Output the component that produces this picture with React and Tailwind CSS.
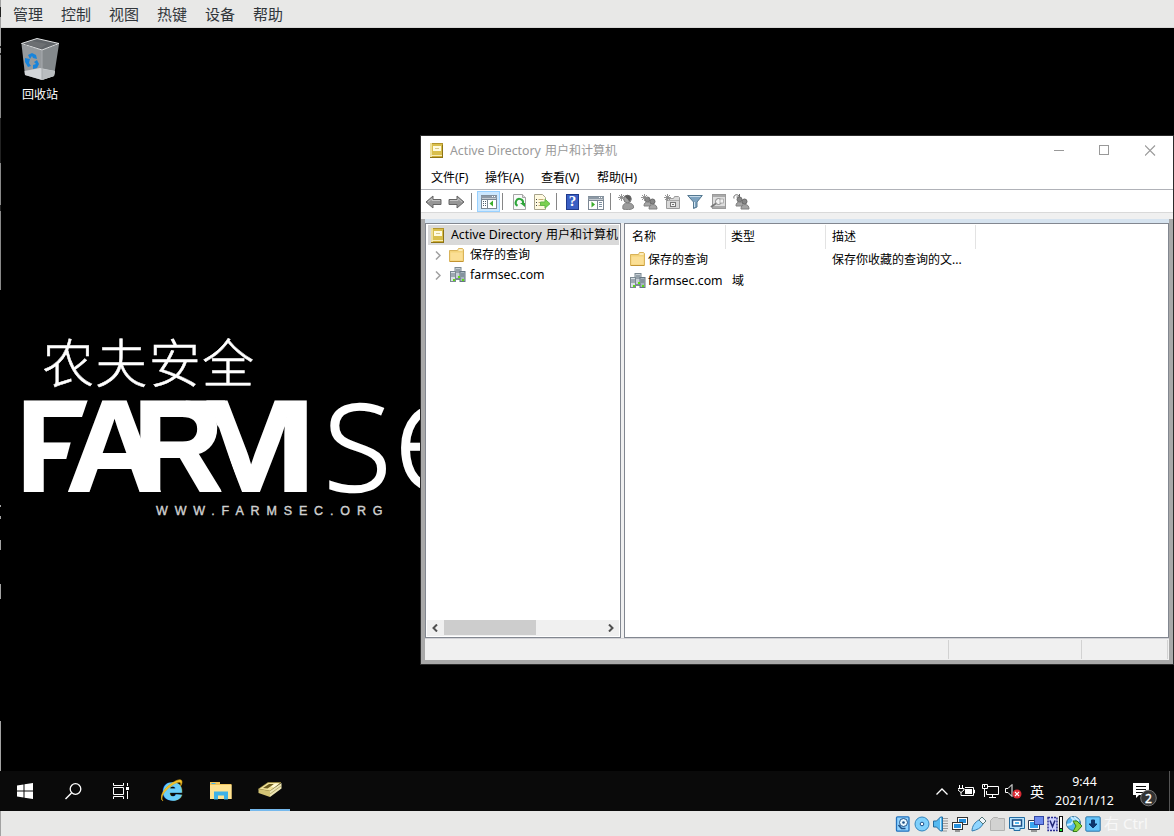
import React from "react";

const UI = "font-['Noto_Sans','Noto_Sans_CJK_SC',sans-serif]";

function Svg({ w = 16, h = 16, className = "", children }) {
  return (
    <svg width={w} height={h} viewBox={`0 0 ${w} ${h}`} className={`block shrink-0 ${className}`}>
      {children}
    </svg>
  );
}

/* ---------- Window icons ---------- */

const BookIcon = () => (
  <Svg w={13} h={15}>
    <rect x="0.5" y="0.5" width="12" height="14" fill="#cfae35" stroke="#b3952c" />
    <rect x="0" y="0" width="2" height="14" fill="#efe09a" />
    <rect x="2" y="1" width="10" height="11" fill="#d9bf4c" />
    <rect x="3" y="3" width="8" height="5" fill="#fffbe0" />
    <path d="M5 5.500h4" stroke="#d9cb8c" />
    <path d="M1 12.500h11" stroke="#f6ecb8" />
    <path d="M0 14.500h13M12.500 2v12" stroke="#8d7316" />
  </Svg>
);

const FolderIcon = () => (
  <Svg w={15} h={14}>
    <path d="M.5 2.500h8l1-2h4l1 1v12H.5z" fill="#f3d37a" stroke="#d9b35a" />
    <path d="M9.500 2h4" stroke="#fff5d0" strokeWidth="1.500" />
    <path d="M1.500 4.500h12v8h-12z" fill="#fbdf95" />
    <path d="M1 13.500h13" stroke="#c39432" />
  </Svg>
);

const DomainIcon = () => (
  <Svg w={16} h={16}>
    <rect x="5" y="0.5" width="6" height="12" fill="#c8d0d6" stroke="#7b8992" />
    <rect x="0.5" y="4.500" width="5" height="10" fill="#d9e0e5" stroke="#7b8992" />
    <rect x="10" y="4.500" width="5" height="10" fill="#a6b4be" stroke="#667681" />
    <path d="M6 3h4M6 5h4M1 7h4M1 9h4M11 7h3M11 9h3" stroke="#63737e" />
    <path d="M5 11.500h6" stroke="#7d8b95" />
    <rect x="3" y="12" width="2" height="2" fill="#5cdc13" />
    <rect x="12" y="12" width="2" height="2" fill="#5cdc13" />
    <rect x="8" y="9" width="2" height="2" fill="#5cdc13" />
  </Svg>
);

/* ---------- Toolbar icons ---------- */

const ArrowIcon = ({ flip }) => (
  <Svg w={17} h={14} className={flip ? "-scale-x-100" : ""}>
    <path d="M1 7l7-6v3.500h8v5H8V13z" fill="#969696" stroke="#666" strokeLinejoin="round" />
    <path d="M3 7l4-3.400V5.500h8" fill="none" stroke="#c3c3c3" />
  </Svg>
);

const TreePaneIcon = () => (
  <Svg w={16} h={14}>
    <rect x="0.5" y="0.5" width="15" height="13" fill="#fff" stroke="#7b8793" />
    <path d="M0 2h16" stroke="#8d99a5" strokeWidth="3" />
    <path d="M11 1.500h1M13 1.500h1" stroke="#fff" />
    <path d="M6.500 4v10M1 4.500h14" stroke="#7b8793" />
    <path d="M2 6.500h1M4 6.500h1M2 8.500h1M4 8.500h1M2 10.500h1M4 10.500h1" stroke="#506070" />
    <path d="M12 5.500v6L8.500 8.500z" fill="#3bae2c" />
  </Svg>
);

const ActionPaneIcon = () => (
  <Svg w={16} h={14}>
    <rect x="0.5" y="0.5" width="15" height="13" fill="#fff" stroke="#7b8793" />
    <path d="M0 2h16" stroke="#8d99a5" strokeWidth="3" />
    <path d="M11 1.500h1M13 1.500h1" stroke="#fff" />
    <path d="M9.500 4v10M1 4.500h14" stroke="#7b8793" />
    <path d="M11 6.500h3M11 8.500h3M11 10.500h3" stroke="#7d8fa0" />
    <path d="M3.500 5.500v6L7 8.500z" fill="#3bae2c" />
  </Svg>
);

const RefreshIcon = () => (
  <Svg w={13} h={16}>
    <path d="M.5.5h9l3 3v12H.5z" fill="#fafafa" stroke="#a5a5a5" />
    <path d="M9.500.5v3h3" fill="#ddd" stroke="#a5a5a5" />
    <path d="M4.500 11.800A3.700 3.700 0 1 1 10 9.400" fill="none" stroke="#2ea53a" strokeWidth="2" />
    <path d="M7 9h5v4z" fill="#2ea53a" />
  </Svg>
);

const ExportIcon = () => (
  <Svg w={17} h={16}>
    <path d="M.5.5h8l3 3v12H.5z" fill="#fffae0" stroke="#a8a48c" />
    <path d="M2 5.500h1M2 8.500h1M2 11.500h1" stroke="#444" />
    <path d="M4.500 5.500h5M4.500 8.500h4M4.500 11.500h4" stroke="#c0aa75" />
    <path d="M6.500 8h4.500V5.200L16 9.700l-5 4.500v-2.700H6.500z" fill="#7bd150" stroke="#64b84a" />
  </Svg>
);

const HelpIcon = () => (
  <span className="flex h-4 w-[13px] shrink-0 items-center justify-center border border-[#1f3a8c] bg-[#3a5fc4] font-['Liberation_Serif',serif] text-[15px] font-bold leading-none text-white">
    ?
  </span>
);

const Star = () => (
  <path d="M3.500 0v7M0 3.500h7M1 1l5 5M6 1L1 6" stroke="#8a8a8a" strokeWidth=".9" />
);

const UserIcon = () => (
  <Svg w={17} h={16}>
    <circle cx="9.500" cy="5" r="3.800" fill="#a0a0a0" stroke="#777" />
    <path d="M7 2c3-2 6 0 6 3l-2 3c0-3-3-3-4-6z" fill="#5a5a5a" />
    <path d="M5 15c-1-4 1-6 5-6s6 2 5.500 5c-2 2-8 2-10.500 1z" fill="#9c9c9c" stroke="#808080" />
    <Star />
  </Svg>
);

const Users = () => (
  <>
    <circle cx="6.500" cy="5.500" r="2.500" fill="#858585" stroke="#6c6c6c" />
    <path d="M3 12c0-3 1.500-4 4-4s3 2 3 4z" fill="#a5a5a5" stroke="#808080" />
    <circle cx="11.500" cy="7.500" r="2.500" fill="#858585" stroke="#666" />
    <path d="M8 15c0-3 1.500-4.500 4-4.500s4 1.500 4 4.500z" fill="#a5a5a5" stroke="#808080" />
  </>
);

const GroupIcon = () => (
  <Svg w={17} h={16}>
    <Users />
    <Star />
  </Svg>
);

const AddGroupIcon = () => (
  <Svg w={17} h={16}>
    <Users />
    <path d="M1 4.500C0 1 4-.5 6 2M6.500 0v3h-3" fill="none" stroke="#666" />
  </Svg>
);

const OuIcon = () => (
  <Svg w={17} h={16}>
    <path d="M2.500 4.500h7l1-2h4l1 1v11h-13z" fill="#d8d8d8" stroke="#9b9b9b" />
    <path d="M3 6.500h12" stroke="#aaa" />
    <rect x="6.500" y="8.500" width="5" height="4" fill="#f4f4f4" stroke="#777" />
    <path d="M8 10.500h2" stroke="#777" />
    <Star />
  </Svg>
);

const FilterIcon = () => (
  <Svg w={16} h={15}>
    <path d="M.7 1.500h14.600L10 8v5L6.500 14.500V8z" fill="#7ea3c0" stroke="#547890" />
    <path d="M2.500 2.500h11" stroke="#c6dbea" />
    <path d="M7.500 8v5" stroke="#d2e4f0" />
  </Svg>
);

const FindIcon = () => (
  <Svg w={16} h={16}>
    <rect x="2.500" y=".5" width="13" height="14" fill="#ddd" stroke="#9a9a9a" />
    <path d="M3 2h12M3 13h12" stroke="#aaa" strokeWidth="2" />
    <circle cx="8.500" cy="7.500" r="3" fill="#f2f2f2" stroke="#858585" />
    <rect x="10" y="5" width="3.500" height="4" fill="#f2f2f2" stroke="#999" strokeWidth=".7" />
    <path d="M6 9.500L.8 13" stroke="#777" strokeWidth="1.600" />
  </Svg>
);

const Sep = ({ className = "" }) => <span className={`h-[17px] w-px shrink-0 bg-[#868686] ${className}`} />;

const Chevron = () => (
  <Svg w={6} h={9}>
    <path d="M1 .5l4 4-4 4" fill="none" stroke="#a0a0a0" strokeWidth="1.500" />
  </Svg>
);

/* ---------- Directory window ---------- */

function Toolbar() {
  return (
    <div className="flex h-[23px] items-center border-b border-[#d9d9d9] pl-1 pt-px">
      <ArrowIcon />
      <span className="ml-1.5"><ArrowIcon flip /></span>
      <Sep className="ml-1.5" />
      <span className="ml-[5px] flex h-[21px] w-[23px] shrink-0 items-center justify-center border border-[#99d1ff] bg-[#cce8ff] pt-px">
        <TreePaneIcon />
      </span>
      <Sep className="ml-[2px]" />
      <span className="ml-[10px] pt-px"><RefreshIcon /></span>
      <span className="ml-2 pt-px"><ExportIcon /></span>
      <Sep className="ml-[5px]" />
      <span className="ml-[9px]"><HelpIcon /></span>
      <span className="ml-[9px] pt-0.5"><ActionPaneIcon /></span>
      <Sep className="ml-[6px]" />
      <span className="ml-[7px]"><UserIcon /></span>
      <span className="ml-1.5"><GroupIcon /></span>
      <span className="ml-1.5"><OuIcon /></span>
      <span className="ml-1.5"><FilterIcon /></span>
      <span className="ml-[7px]"><FindIcon /></span>
      <span className="ml-[7px]"><AddGroupIcon /></span>
    </div>
  );
}

function TreePane() {
  return (
    <div className="flex w-[196px] shrink-0 flex-col border border-[#828790] bg-white py-px pl-px pr-px">
      <div className="ml-px flex h-5 items-center overflow-hidden bg-[#d9d9d9] pl-[3px] text-[12.300px]">
        <BookIcon />
        <span className="ml-[7px] flex whitespace-nowrap">
          <span className="w-[95px]">Active Directory</span>
          <span className="text-[12px]">用户和计算机</span>
        </span>
      </div>
      <div className="flex h-5 items-center pl-2">
        <Chevron />
        <span className="ml-2"><FolderIcon /></span>
        <span className="ml-[6px]">保存的查询</span>
      </div>
      <div className="flex h-5 items-center pl-2">
        <Chevron />
        <span className="ml-[9px]"><DomainIcon /></span>
        <span className="ml-1 text-[12.300px]">farmsec.com</span>
      </div>
      <div className="mt-auto flex h-4 items-center bg-[#f0f0f0]">
        <span className="flex w-[17px] justify-center pr-0.5">
          <Svg w={6} h={8}><path d="M5 .5L1.500 4 5 7.500" fill="none" stroke="#505050" strokeWidth="2" /></Svg>
        </span>
        <span className="h-[15px] w-[92px] self-start bg-[#cdcdcd]" />
        <span className="ml-auto flex w-[17px] justify-center">
          <Svg w={6} h={8}><path d="M1 .5L4.500 4 1 7.500" fill="none" stroke="#505050" strokeWidth="2" /></Svg>
        </span>
      </div>
    </div>
  );
}

function ListPane() {
  return (
    <div className="flex-1 border border-[#828790] bg-white pt-px">
      <div className="flex h-6 items-center">
        <span className="flex h-full w-[101px] items-center border-r border-[#e3e3e3] pl-[7px]">名称</span>
        <span className="flex h-full w-[100px] items-center border-r border-[#e3e3e3] pl-[5px]">类型</span>
        <span className="flex h-full w-[150px] items-center border-r border-[#e3e3e3] pl-[6px]">描述</span>
      </div>
      <div className="flex h-[21px] items-center">
        <span className="flex w-[201px] items-center pl-[5px]">
          <span className="-mt-0.5"><FolderIcon /></span>
          <span className="ml-[3px]">保存的查询</span>
        </span>
        <span className="pl-[6px]">保存你收藏的查询的文...</span>
      </div>
      <div className="flex h-[22px] items-center">
        <span className="flex w-[101px] items-center pl-[5px]">
          <span className="-mt-px"><DomainIcon /></span>
          <span className="ml-0.5 pt-px text-[12.300px]">farmsec.com</span>
        </span>
        <span className="pl-[6px]">域</span>
      </div>
    </div>
  );
}

function DirectoryWindow() {
  return (
    <section className={`absolute left-[420px] top-[107px] flex h-[530px] w-[754px] flex-col border border-[#2b2b2b] bg-white text-[12px] leading-none text-black ${UI}`}>
      <header className="flex h-[30px] items-center pb-px pl-[9px] text-[#999]">
        <BookIcon />
        <span className="ml-[7px] flex items-center whitespace-nowrap pt-px text-[12.300px]">
          <span className="w-[95px]">Active Directory</span>
          <span className="text-[12px]">用户和计算机</span>
        </span>
        <span className="ml-auto flex items-center gap-[35px] pb-px pr-[17px]">
          <Svg w={11} h={11}><path d="M1 5.500h10" stroke="#999" /></Svg>
          <Svg w={11} h={11}><rect x=".5" y=".5" width="9" height="9" fill="none" stroke="#999" /></Svg>
          <Svg w={11} h={11}><path d="M0 .5l10 10M10 .5l-10 10" stroke="#999" strokeWidth="1.100" /></Svg>
        </span>
      </header>
      <nav className="flex h-6 items-center gap-4 border-b border-[#b0b2b8] pl-[10px] text-[12px]">
        <span className="w-[38px] whitespace-nowrap">文件(F)</span>
        <span className="w-10 whitespace-nowrap">操作(A)</span>
        <span className="w-10 whitespace-nowrap">查看(V)</span>
        <span className="w-10 whitespace-nowrap">帮助(H)</span>
      </nav>
      <Toolbar />
      <div className="h-[6px] bg-[#f0f0f0]" />
      <div className="flex flex-1 flex-col border-x-4 border-b-4 border-[#a9a9a9] bg-[#f0f0f0]">
        <div className="h-1 bg-[#d6e3ef]" />
        <div className="flex h-[415px] gap-[3px]">
          <TreePane />
          <ListPane />
        </div>
        <footer className="flex flex-1 justify-end border-t border-[#d2d2d6] pb-px pt-px">
          <span className="w-[133px] border-l border-[#d2d2d2]" />
          <span className="w-[87px] border-x border-[#d2d2d2]" />
          <span className="w-px" />
        </footer>
      </div>
    </section>
  );
}

/* ---------- Desktop ---------- */

function RecycleBin() {
  return (
    <div className={`flex w-20 flex-col items-center pt-[9px] text-[12px] leading-none text-white ${UI}`}>
      <Svg w={40} h={44}>
        <path d="M1.500 7L22 13v30L5 38z" fill="#969a9d" />
        <path d="M39 7L22 13v30l12-4z" fill="#84898c" />
        <path d="M4.500 34L20 31l15 3-1 5-12 4L5 38z" fill="#d2d5d8" />
        <path d="M22 32l13 2-1 5-12 4z" fill="#b9bdc0" />
        <path d="M1.500 6.500L17 1.500l22 5L22 13z" fill="#606468" stroke="#e1e3e4" />
        <path d="M12 4l15 3-6 4L4 7z" fill="#6c6f72" />
        <path d="M22 13v30" stroke="#a7abae" />
        <g fill="#1784dc">
          <path d="M8 18l4-2 4 2 1 4-4-1-1-2-2 3z" />
          <path d="M5 21l5 1-1 4 2 3-3 1-3-5z" />
          <path d="M17 23l2 4-2 4-4 1v-4l3-1-2-2z" />
        </g>
      </Svg>
      <span className="mt-2">回收站</span>
    </div>
  );
}

function Wallpaper() {
  return (
    <svg width="421" height="200" viewBox="0 330 421 200" className="absolute left-0 top-[302px] fill-white">
      <defs>
        <clipPath id="mClip">
          <path d="M204 395H320V500H241L218 427z" />
        </clipPath>
      </defs>
      <text x="42" y="382.500" fontSize="52" textLength="212" stroke="#fff" strokeWidth=".5" className="font-['Noto_Sans_CJK_SC',sans-serif] font-light">
        农夫安全
      </text>
      <g className="font-['Liberation_Sans',sans-serif] font-bold" fontSize="130" stroke="#fff" strokeWidth="2">
        <text x="16.500" y="491" textLength="76" lengthAdjust="spacingAndGlyphs">F</text>
        <path d="M88.500 398H98V420H81z" fill="#000" stroke="none" />
        <path d="M73.500 432L65.500 462H95V432z" fill="#000" stroke="none" />
        <text x="66" y="491" textLength="97" lengthAdjust="spacingAndGlyphs">A</text>
        <text x="133" y="491" textLength="90" lengthAdjust="spacingAndGlyphs">R</text>
        <path d="M185 400.500H225V412H212z" stroke="none" />
        <g clipPath="url(#mClip)">
          <text x="186" y="491" textLength="130" lengthAdjust="spacingAndGlyphs">M</text>
        </g>
        <path d="M218.500 426L241.500 494H222L214 450z" fill="#000" stroke="none" />
      </g>
      <g className="font-['Open_Sans',sans-serif] font-light" fontSize="119" stroke="#fff" strokeWidth="2.600">
        <text x="324" y="491" textLength="67" lengthAdjust="spacingAndGlyphs">S</text>
        <text x="395" y="491">Є</text>
      </g>
      <text x="156" y="515" fontSize="12.500" textLength="226.500" stroke="#d0d0d0" strokeWidth=".4" className="fill-[#d0d0d0] font-['Liberation_Sans',sans-serif]">
        WWW.FARMSEC.ORG
      </text>
    </svg>
  );
}

/* ---------- Taskbar ---------- */

function Taskbar() {
  return (
    <div className="flex h-10 shrink-0 items-center bg-[#0a0a0a] pl-[17px]">
      <Svg w={16} h={16}>
        <path d="M0 2.500L6.500 1.500v6H0zM7.500 1.300L16 0v7.500H7.500zM0 8.500h6.500v6L0 13.500zM7.500 8.500H16V16l-8.500-1.300z" fill="#fff" />
      </Svg>
      <Svg w={17} h={17} className="ml-8">
        <circle cx="10.500" cy="6" r="5.300" fill="none" stroke="#fff" strokeWidth="1.300" />
        <path d="M6.500 10L.5 16" stroke="#fff" strokeWidth="1.500" />
      </Svg>
      <Svg w={17} h={16} className="ml-[31px]">
        <path d="M.5 0v2.500h10V0M.5 16v-2.500h10V16M.5 4.500h10v7H.5zM14.500 0v3M14.500 8v8" fill="none" stroke="#fff" />
        <rect x="13" y="4" width="3" height="3" fill="#fff" />
      </Svg>
      <Svg w={24} h={24} className="ml-[31px]">
        <text x="1.500" y="21" fontSize="32" textLength="20" lengthAdjust="spacingAndGlyphs" className="fill-[#6bcdf8] font-['Liberation_Sans',sans-serif] font-bold" stroke="#6bcdf8" strokeWidth="1.500">e</text>
        <path d="M2 22C-2 20 1 12 7 7S21-2 21 3c0 1-.5 3-1.500 4C21 2 17 2 10 7S-1 19 2 22z" fill="#f7c52c" stroke="#d9a51a" strokeWidth=".6" />
      </Svg>
      <Svg w={22} h={18} className="ml-[25px]">
        <path d="M0 0h10v2h11.500v15H0z" fill="#f0c45c" />
        <path d="M0 3h21.500v14H0z" fill="#ffe392" />
        <path d="M1.500 1.500h4" stroke="#44b4e8" />
        <path d="M4 17.500v-8h14v8h-4v-4H8v4z" fill="#3fb2e8" />
      </Svg>
      <span className="ml-[18px] flex h-10 w-10 flex-col items-center border-b-2 border-[#76b9ed] pt-[11px]">
        <Svg w={24} h={16}>
          <path d="M.5 7L10 .5h13L12 9z" fill="#f1e39b" stroke="#a08d3a" strokeWidth=".6" />
          <path d="M5 6l6-4h5L9.500 6.500z" fill="#6b5b20" />
          <path d="M13 4.500l4-3h4L16 5.500z" fill="#fff9d5" />
          <path d="M.5 7L12 9v6L.5 11z" fill="#d3c375" />
          <path d="M12 9L23.500 1v5.500L12 15z" fill="#eee6b4" />
          <path d="M12 12l11-8" stroke="#b9ad70" />
        </Svg>
      </span>
      <div className="ml-auto flex h-10 items-center text-white">
        <Svg w={12} h={7}><path d="M.5 6.500L6 1l5.500 5.500" fill="none" stroke="#fff" strokeWidth="1.300" /></Svg>
        <Svg w={17} h={14} className="ml-2.5">
          <path d="M1.500 1v3M4.500 1v3M0 4.500h6v1.500L3 8.500 0 6zM3 8v3.500h3" fill="none" stroke="#fff" />
          <path d="M7 3.500h8.500v8H5M15.500 6h1v3h-1" fill="none" stroke="#fff" />
          <rect x="7" y="5" width="7" height="5" fill="#fff" />
        </Svg>
        <Svg w={17} h={14} className="ml-[7px]">
          <path d="M6 2.500h10.500v8H4.500V7M10.500 11v2.500M7 13.500h7M.5.5h5v4h-5zM2.500 5v8M2.500 1v2" fill="none" stroke="#fff" />
        </Svg>
        <Svg w={18} h={16} className="ml-[6px]">
          <path d="M.5 5.500H3l4-4v12l-4-4H.5z" fill="none" stroke="#fff" />
          <circle cx="12" cy="11" r="4.500" fill="#d92a34" />
          <path d="M10 9l4 4M14 9l-4 4" stroke="#fff" strokeWidth="1.200" />
        </Svg>
        <span className="ml-[7px] w-3.5 font-['Noto_Sans_CJK_SC',sans-serif] text-[14px] leading-none">英</span>
        <span className="ml-[10px] flex w-[61px] flex-col items-center gap-[7px] whitespace-nowrap font-['Noto_Sans',sans-serif] text-[12.400px] leading-[12px]">
          <span>9:44</span>
          <span>2021/1/12</span>
        </span>
        <span className="ml-[18px] h-[19px] w-[26px]">
          <Svg w={26} h={25}>
            <path d="M0 1h16v12H6l-3 3v-3H0z" fill="#fff" />
            <path d="M3 4.500h10M3 7.500h10M3 10.500h7" stroke="#0a0a0a" />
            <circle cx="15.500" cy="16" r="7.800" fill="#333" stroke="#767676" />
            <text x="15.500" y="20.500" textAnchor="middle" fontSize="12" stroke="#fff" strokeWidth=".4" className="fill-white font-['Noto_Sans',sans-serif]">2</text>
          </Svg>
        </span>
        <span className="ml-[10px] h-full w-px bg-[#555]" />
        <span className="w-1" />
      </div>
    </div>
  );
}

/* ---------- Host status bar ---------- */

const LINE = "#1d4f86";

function HostStatusBar() {
  return (
    <div className="flex h-[25px] shrink-0 items-center bg-[#e8e8e7] pl-[895px]">
      <div className="flex items-center gap-[3px]">
        <Svg><rect x="1.500" y=".8" width="12.500" height="14.400" rx="1" fill="#8fd2ff" stroke="#2372bd" strokeWidth="1.300" /><circle cx="8.500" cy="6.500" r="4" fill="#e9f7ff" stroke={LINE} /><circle cx="8.500" cy="6.500" r="1.300" fill={LINE} /><path d="M3.500 9l3 3.500h4" fill="none" stroke={LINE} strokeWidth="1.600" /></Svg>
        <Svg><circle cx="8" cy="8" r="7" fill="#7fd0fb" stroke="#3185bd" /><circle cx="8" cy="8" r="1.800" fill="#fff" stroke={LINE} /></Svg>
        <Svg><path d="M10 2.500h5M10 5h5M10 7.500h5M10 10h5M10 12.500h5M10 15h4" stroke="#999" /><path d="M.5 5h3l4-4h2v14h-2l-4-4h-3z" fill="#55b9f0" stroke="#246c9f" /><path d="M7.500 2v12" stroke="#c7ecff" /></Svg>
        <Svg><rect x="5.500" y="1.500" width="10" height="7" fill="#fff" stroke="#333" /><rect x="7" y="3" width="7" height="4" fill="#2690dd" /><rect x=".5" y="6.500" width="10" height="7" fill="#fff" stroke="#333" /><rect x="2" y="8" width="7" height="4" fill="#2690dd" /><path d="M3 15h5" stroke="#444" /></Svg>
        <Svg><path d="M1 15c0-5 3-9 7-11l4 4c-2 4-6 6-11 7z" fill="#8fd5ff" stroke="#367eaf" /><path d="M8 4l3-3 4 4-3 3z" fill="#eef5fa" stroke="#577" /></Svg>
        <Svg><path d="M.5 4.500l3-3h4l1 1h6v12H.5z" fill="#d2d2d1" stroke="#b2b2b1" /></Svg>
        <Svg><path d="M.5 1.500h15v11H11v2H5v-2H.5z" fill="#b7e4ff" stroke="#236da2" /><rect x="3.500" y="4" width="9" height="6" fill="#fff" stroke={LINE} strokeWidth="1.500" /><rect x="6" y="6" width="4" height="2" fill="#55b9f0" /></Svg>
        <Svg><path d="M.5 4.500h11v9H.5z" fill="#fff" stroke="#333b50" /><path d="M2 6h8v6H2z" fill="#38a6ef" /><path d="M3 15h6" stroke="#444" /><rect x="6.500" y=".5" width="9" height="8" fill="#6e8cee" stroke="#3348a5" /></Svg>
        <Svg><rect x="1" y="1.500" width="9" height="13" fill="#ccd1ff" stroke="#282c91" strokeWidth="1.400" strokeDasharray="2 1" /><path d="M3 4.500l2.500 6L8 4.500" fill="none" stroke="#202776" strokeWidth="1.500" /><rect x="12" y="0" width="4" height="16" fill="#111" /><rect x="13" y="1" width="2" height="11" fill="#fff" /><rect x="13" y="13" width="2" height="2" fill="#13ec30" /></Svg>
        <Svg><circle cx="7.500" cy="7.500" r="7" fill="#54b6f1" stroke="#336b91" /><path d="M5 1l3 3-3 4-4 1M8 1l5 4" fill="none" stroke="#c7ecff" strokeWidth="2" /><path d="M7 5h4l5 5-5 5.500H7l3-5.500z" fill="#8ed33e" stroke="#367f18" /></Svg>
        <Svg><rect x=".8" y=".8" width="14.400" height="14.400" rx="1" fill="#65c4fa" stroke="#2d75a8" /><path d="M6.500 4h3v4h2.500l-4 4-4-4h2.500z" fill="#0d356b" stroke="#0d356b" strokeLinejoin="round" /></Svg>
      </div>
      <span className="ml-[3px] whitespace-nowrap font-['Noto_Sans','Noto_Sans_CJK_SC',sans-serif] text-[15px] leading-none text-[#f8f8f8]">右 Ctrl</span>
    </div>
  );
}

const MENUS = ["管理", "控制", "视图", "热键", "设备", "帮助"];

export default function App() {
  return (
    <main className="relative flex h-[836px] w-[1174px] flex-col overflow-hidden bg-black">
      <nav className="flex h-7 shrink-0 items-center gap-[18px] border-b border-[#d8d8d7] bg-[#e8e8e7] pl-[13px] font-['Noto_Sans_CJK_SC',sans-serif] text-[15px] leading-none text-[#31363b]">
        {MENUS.map((m) => (
          <span key={m} className="w-[30px]">{m}</span>
        ))}
      </nav>
      <div className="relative h-[743px] shrink-0">
        <RecycleBin />
        <Wallpaper />
        <DirectoryWindow />
      </div>
      <Taskbar />
      <HostStatusBar />
      <Svg w={1} h={836} className="absolute left-0 top-0">
        <path d="M.5 0v54M.5 811v25M.5 721v50M.5 540v10M.5 584v15M.5 505v2M.5 516v3" stroke="#a2a2a2" />
        <path d="M.5 55v235" stroke="#898989" />
        <path d="M.5 7v10M.5 46v2M.5 53v2M.5 118v45M.5 205v6" stroke="#222" />
      </Svg>
    </main>
  );
}
